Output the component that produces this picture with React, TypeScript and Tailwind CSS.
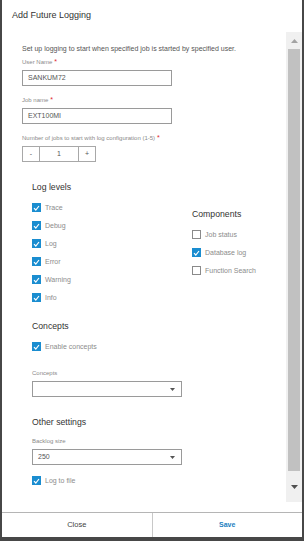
import React from "react";

const levels = ["Trace", "Debug", "Log", "Error", "Warning", "Info"];
const components = [
  { name: "Job status", checked: false },
  { name: "Database log", checked: true },
  { name: "Function Search", checked: false },
];

function Box({ checked }: { checked: boolean }) {
  if (checked) {
    return (
      <span className="w-[9px] h-[9px] bg-[#1a8dd0] flex items-center justify-center shrink-0">
        <svg width="7" height="6" viewBox="0 0 7 6">
          <path d="M1 3.2 L2.8 5 L6 1" fill="none" stroke="#fff" strokeWidth="1.2" />
        </svg>
      </span>
    );
  }
  return <span className="w-[9px] h-[9px] border border-[#8a8a8a] bg-white shrink-0" />;
}

function Check({ label, checked }: { label: string; checked: boolean }) {
  return (
    <div className="flex items-center gap-[4px] h-[9px]">
      <Box checked={checked} />
      <span className="text-[7px] leading-[9px] text-[#8c8c8c]">{label}</span>
    </div>
  );
}

function FieldLabel({ text, required }: { text: string; required?: boolean }) {
  return (
    <div className="text-[6px] leading-[8px] text-[#8a8a8a]">
      {text}
      {required && <span className="text-[#e0262c] text-[7px]"> *</span>}
    </div>
  );
}

function Select({ value }: { value: string }) {
  return (
    <div className="w-[150px] h-[16px] border border-[#9a9a9a] flex items-center justify-between pl-[5px] pr-[6px]">
      <span className="text-[7px] text-[#555]">{value}</span>
      <svg width="5" height="3" viewBox="0 0 5 3">
        <path d="M0 0 H5 L2.5 3 Z" fill="#555" />
      </svg>
    </div>
  );
}

function Heading({ children }: { children: React.ReactNode }) {
  return <div className="text-[8.7px] leading-[12px] text-[#333]">{children}</div>;
}

export default function App() {
  return (
    <div
      className="w-[304px] h-[541px] bg-[#474747] px-[2px] pb-[4px]"
      style={{ fontFamily: '"Liberation Sans", Arial, sans-serif' }}
    >
      <div className="w-[300px] h-[537px] bg-white flex flex-col">
        {/* Header */}
        <div className="h-[32px] flex items-center pl-[10px] shrink-0">
          <span className="text-[9px] text-[#333]">Add Future Logging</span>
        </div>

        {/* Body */}
        <div className="h-[470px] flex shrink-0">
          <div className="flex-1 pl-[20px]">
            <div className="mt-[12px] text-[7px] leading-[10px] text-[#555]">
              Set up logging to start when specified job is started by specified user.
            </div>

            <div className="mt-[4px]">
              <FieldLabel text="User Name" required />
            </div>
            <div className="mt-[4px] w-[150px] h-[16px] border border-[#9a9a9a] flex items-center pl-[5px]">
              <span className="text-[7px] text-[#555]">SANKUM72</span>
            </div>

            <div className="mt-[10px]">
              <FieldLabel text="Job name" required />
            </div>
            <div className="mt-[4px] w-[150px] h-[16px] border border-[#9a9a9a] flex items-center pl-[5px]">
              <span className="text-[7px] text-[#555]">EXT100MI</span>
            </div>

            <div className="mt-[10px]">
              <FieldLabel text="Number of jobs to start with log configuration (1-5)" required />
            </div>
            <div className="mt-[4px] w-[74px] h-[16px] border border-[#a8a8a8] flex text-[7px] text-[#555]">
              <div className="w-[16px] flex items-center justify-center">-</div>
              <div className="flex-1 border-x border-[#a8a8a8] flex items-center justify-center">1</div>
              <div className="w-[16px] flex items-center justify-center">+</div>
            </div>

            <div className="pl-[10px]">
              <div className="mt-[19px]">
                <Heading>Log levels</Heading>
              </div>
              <div className="flex">
                <div className="w-[160px] mt-[10px] flex flex-col gap-[9px]">
                  {levels.map((l) => (
                    <Check key={l} label={l} checked />
                  ))}
                </div>
                <div className="pt-[15px]">
                  <Heading>Components</Heading>
                  <div className="mt-[10px] flex flex-col gap-[9px]">
                    {components.map((c) => (
                      <Check key={c.name} label={c.name} checked={c.checked} />
                    ))}
                  </div>
                </div>
              </div>

              <div className="mt-[18px]">
                <Heading>Concepts</Heading>
              </div>
              <div className="mt-[10px]">
                <Check label="Enable concepts" checked />
              </div>
              <div className="mt-[18px]">
                <FieldLabel text="Concepts" />
              </div>
              <div className="mt-[4px]">
                <Select value="" />
              </div>

              <div className="mt-[19px]">
                <Heading>Other settings</Heading>
              </div>
              <div className="mt-[9px]">
                <FieldLabel text="Backlog size" />
              </div>
              <div className="mt-[4px]">
                <Select value="250" />
              </div>
              <div className="mt-[11px]">
                <Check label="Log to file" checked />
              </div>
            </div>
          </div>

          {/* Scrollbar */}
          <div className="w-[16px] bg-[#f0f0f0] flex flex-col items-center">
            <div className="h-[17px] w-full flex items-center justify-center">
              <svg width="7" height="4" viewBox="0 0 7 4">
                <path d="M0 4 L3.5 0 L7 4 Z" fill="#a3a3a3" />
              </svg>
            </div>
            <div className="h-[422px] w-[12px] bg-[#c1c1c1]" />
            <div className="flex-1 w-full flex items-center justify-center">
              <svg width="7" height="4" viewBox="0 0 7 4">
                <path d="M0 0 H7 L3.5 4 Z" fill="#505050" />
              </svg>
            </div>
          </div>
        </div>

        {/* Footer */}
        <div className="mt-[10px] flex-1 border-t border-[#b5b5b5] flex">
          <div className="flex-1 flex items-center justify-center text-[7.5px] text-[#444]">Close</div>
          <div className="flex-1 border-l border-[#c8c8c8] flex items-center justify-center text-[7px] font-bold text-[#1b7fc1]">
            Save
          </div>
        </div>
      </div>
    </div>
  );
}
